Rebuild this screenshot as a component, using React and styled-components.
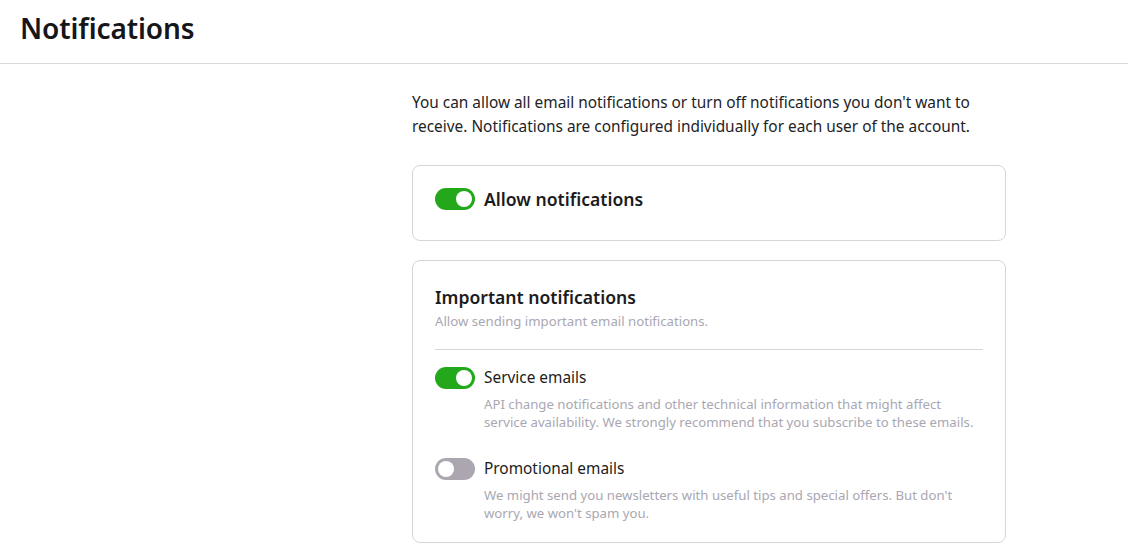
import React, { useState } from 'react';
import styled, { createGlobalStyle } from 'styled-components';

const GlobalStyle = createGlobalStyle`
  body {
    margin: 0;
    background: #fff;
    font-family: "Noto Sans", "Open Sans", sans-serif;
    color: #1f1f24;
  }
`

const Header = styled.header`
  height: 63px;
  border-bottom: 1px solid #d8d8d8;
  display: flex;
  align-items: center;
  padding-left: 20px;
`

const Title = styled.h1`
  margin: 0;
  font-size: 28px;
  font-weight: 600;
  color: #15151a;
  letter-spacing: -0.1px;
  padding-bottom: 8px;
`

const Content = styled.main`
  width: 594px;
  margin-left: 412px;
  padding-top: 27px;
  display: flex;
  flex-direction: column;
`

const Intro = styled.p`
  margin: 0 0 26px;
  font-size: 15.4px;
  line-height: 24px;
  color: #222226;
`

const Card = styled.section`
  border: 1px solid #d6d6da;
  border-radius: 8px;
  padding: ${p => p.$pad || '22px'};
  margin-bottom: 19px;
`

const Row = styled.label`
  display: flex;
  align-items: center;
  gap: 9px;
  cursor: pointer;
`

const Track = styled.span`
  width: 40px;
  height: 22px;
  border-radius: 11px;
  background: ${p => (p.$on ? '#22a81a' : '#aca6b1')};
  position: relative;
  flex-shrink: 0;
  transition: background 0.15s;
`

const Knob = styled.span`
  position: absolute;
  top: 3px;
  left: ${p => (p.$on ? '21px' : '3px')};
  width: 16px;
  height: 16px;
  border-radius: 50%;
  background: #fff;
  transition: left 0.15s;
`

const Label = styled.span`
  font-size: ${p => (p.$big ? '17.6px' : '15.4px')};
  font-weight: ${p => (p.$big ? 600 : 400)};
  line-height: 24px;
  color: #1b1b20;
`

const SectionTitle = styled.h2`
  margin: 0;
  font-size: 17.6px;
  font-weight: 600;
  line-height: 24px;
  color: #1b1b20;
`

const Muted = styled.p`
  margin: ${p => p.$m || '0'};
  font-size: 13.2px;
  line-height: 18px;
  color: #a9a7b2;
`

const Divider = styled.hr`
  border: none;
  border-top: 1px solid #d6d6da;
  margin: 19px 0 16px;
`

const Option = styled.div`
  & + & {
    margin-top: 26px;
  }
`

const Toggle = ({ on, onChange }) => (
  <Track $on={on} onClick={onChange}>
    <Knob $on={on} />
  </Track>
)

const App = () => {
  const [allow, setAllow] = useState(true);
  const [service, setService] = useState(true);
  const [promo, setPromo] = useState(false);

  return (
    <>
      <GlobalStyle />
      <Header>
        <Title>Notifications</Title>
      </Header>
      <Content>
        <Intro>
          You can allow all email notifications or turn off notifications you don't want to receive. Notifications are configured individually for each user of the account.
        </Intro>
        <Card $pad="21px 22px 29px">
          <Row>
            <Toggle on={allow} onChange={() => setAllow(!allow)} />
            <Label $big>Allow notifications</Label>
          </Row>
        </Card>
        <Card $pad="24px 22px 20px">
          <SectionTitle>Important notifications</SectionTitle>
          <Muted $m="3px 0 0">Allow sending important email notifications.</Muted>
          <Divider />
          <Option>
            <Row>
              <Toggle on={service} onChange={() => setService(!service)} />
              <Label>Service emails</Label>
            </Row>
            <Muted $m="5px 0 0 49px">
              API change notifications and other technical information that might affect service availability. We strongly recommend that you subscribe to these emails.
            </Muted>
          </Option>
          <Option>
            <Row>
              <Toggle on={promo} onChange={() => setPromo(!promo)} />
              <Label>Promotional emails</Label>
            </Row>
            <Muted $m="5px 0 0 49px">
              We might send you newsletters with useful tips and special offers. But don't worry, we won't spam you.
            </Muted>
          </Option>
        </Card>
      </Content>
    </>
  )
}

export default App;
